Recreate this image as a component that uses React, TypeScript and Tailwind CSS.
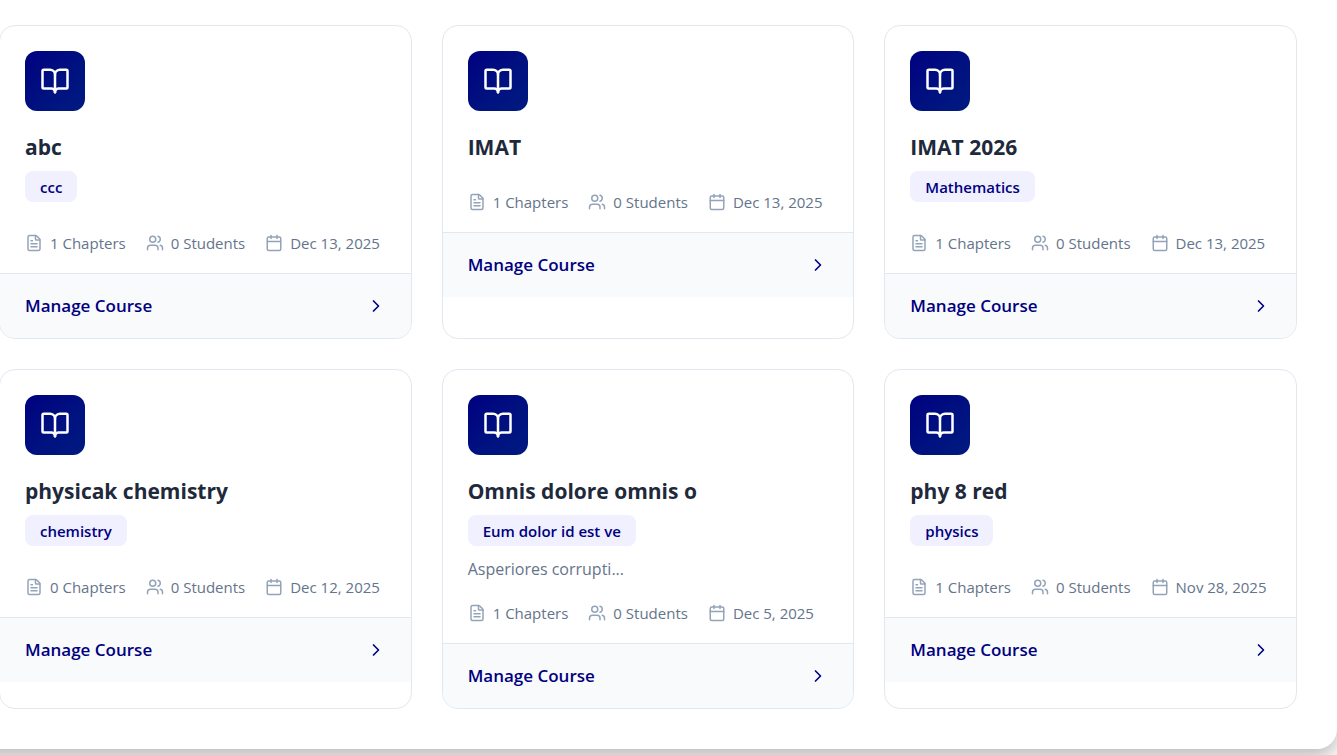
import { BookOpen, Calendar, ChevronRight, FileText, Users } from "lucide-react";

type Course = {
  title: string;
  subject?: string;
  description?: string;
  chapters: number;
  students: number;
  date: string;
};

const courses: Course[] = [
  { title: "abc", subject: "ccc", chapters: 1, students: 0, date: "Dec 13, 2025" },
  { title: "IMAT", chapters: 1, students: 0, date: "Dec 13, 2025" },
  { title: "IMAT 2026", subject: "Mathematics", chapters: 1, students: 0, date: "Dec 13, 2025" },
  { title: "physicak chemistry", subject: "chemistry", chapters: 0, students: 0, date: "Dec 12, 2025" },
  {
    title: "Omnis dolore omnis o",
    subject: "Eum dolor id est ve",
    description: "Asperiores corrupti...",
    chapters: 1,
    students: 0,
    date: "Dec 5, 2025",
  },
  { title: "phy 8 red", subject: "physics", chapters: 1, students: 0, date: "Nov 28, 2025" },
];

function CourseCard({ course }: { course: Course }) {
  return (
    <article className="overflow-hidden rounded-2xl border border-[#e2e8f0] bg-white">
      <div className="px-[25px] pt-[25px] pb-[18px]">
        <div className="flex size-[60px] items-center justify-center rounded-xl bg-linear-135 from-[#000080] to-[#001a80] text-white">
          <BookOpen size={30} aria-hidden />
        </div>
        <h3 className="mt-[22px] text-[21px] leading-7 font-bold text-[#1e293b]">{course.title}</h3>
        {course.subject && (
          <span className="mt-[10px] block h-[31px] w-fit rounded-lg bg-[#f0f0ff] px-[15px] text-[15px] leading-8 font-semibold text-[#000080]">
            {course.subject}
          </span>
        )}
        {course.description && (
          <p className="mt-[10px] -mb-[10px] text-base leading-[26px] text-[#64748b]">{course.description}</p>
        )}
        <ul className="mt-[29px] flex gap-5 text-[15px] leading-6 whitespace-nowrap text-[#64748b]">
          <li className="flex items-center gap-[7px]">
            <FileText size={18} className="text-[#94a3b8]" aria-hidden />
            {course.chapters} Chapters
          </li>
          <li className="flex items-center gap-[7px]">
            <Users size={18} className="text-[#94a3b8]" aria-hidden />
            {course.students} Students
          </li>
          <li className="flex items-center gap-[7px]">
            <Calendar size={18} className="text-[#94a3b8]" aria-hidden />
            {course.date}
          </li>
        </ul>
      </div>
      <div className="border-t border-[#e2e8f0] bg-[#f8fafc] px-[25px] py-[18px]">
        <button type="button" className="flex w-full items-center justify-between text-[17px] leading-7 font-semibold text-[#000080]">
          Manage Course
          <ChevronRight size={20} aria-hidden />
        </button>
      </div>
    </article>
  );
}

export default function App() {
  return (
    <div className="min-h-screen overflow-hidden bg-white font-['Segoe_UI','Open_Sans',sans-serif]">
      <main className="-ml-10 rounded-b-[20px] bg-white pt-[25px] pr-10 pb-10 pl-[39px] shadow-[0_8px_20px_rgba(0,0,0,0.28)]">
        <div className="grid grid-cols-3 gap-[30px]">
          {courses.map((course) => (
            <CourseCard key={course.title} course={course} />
          ))}
        </div>
      </main>
    </div>
  );
}
